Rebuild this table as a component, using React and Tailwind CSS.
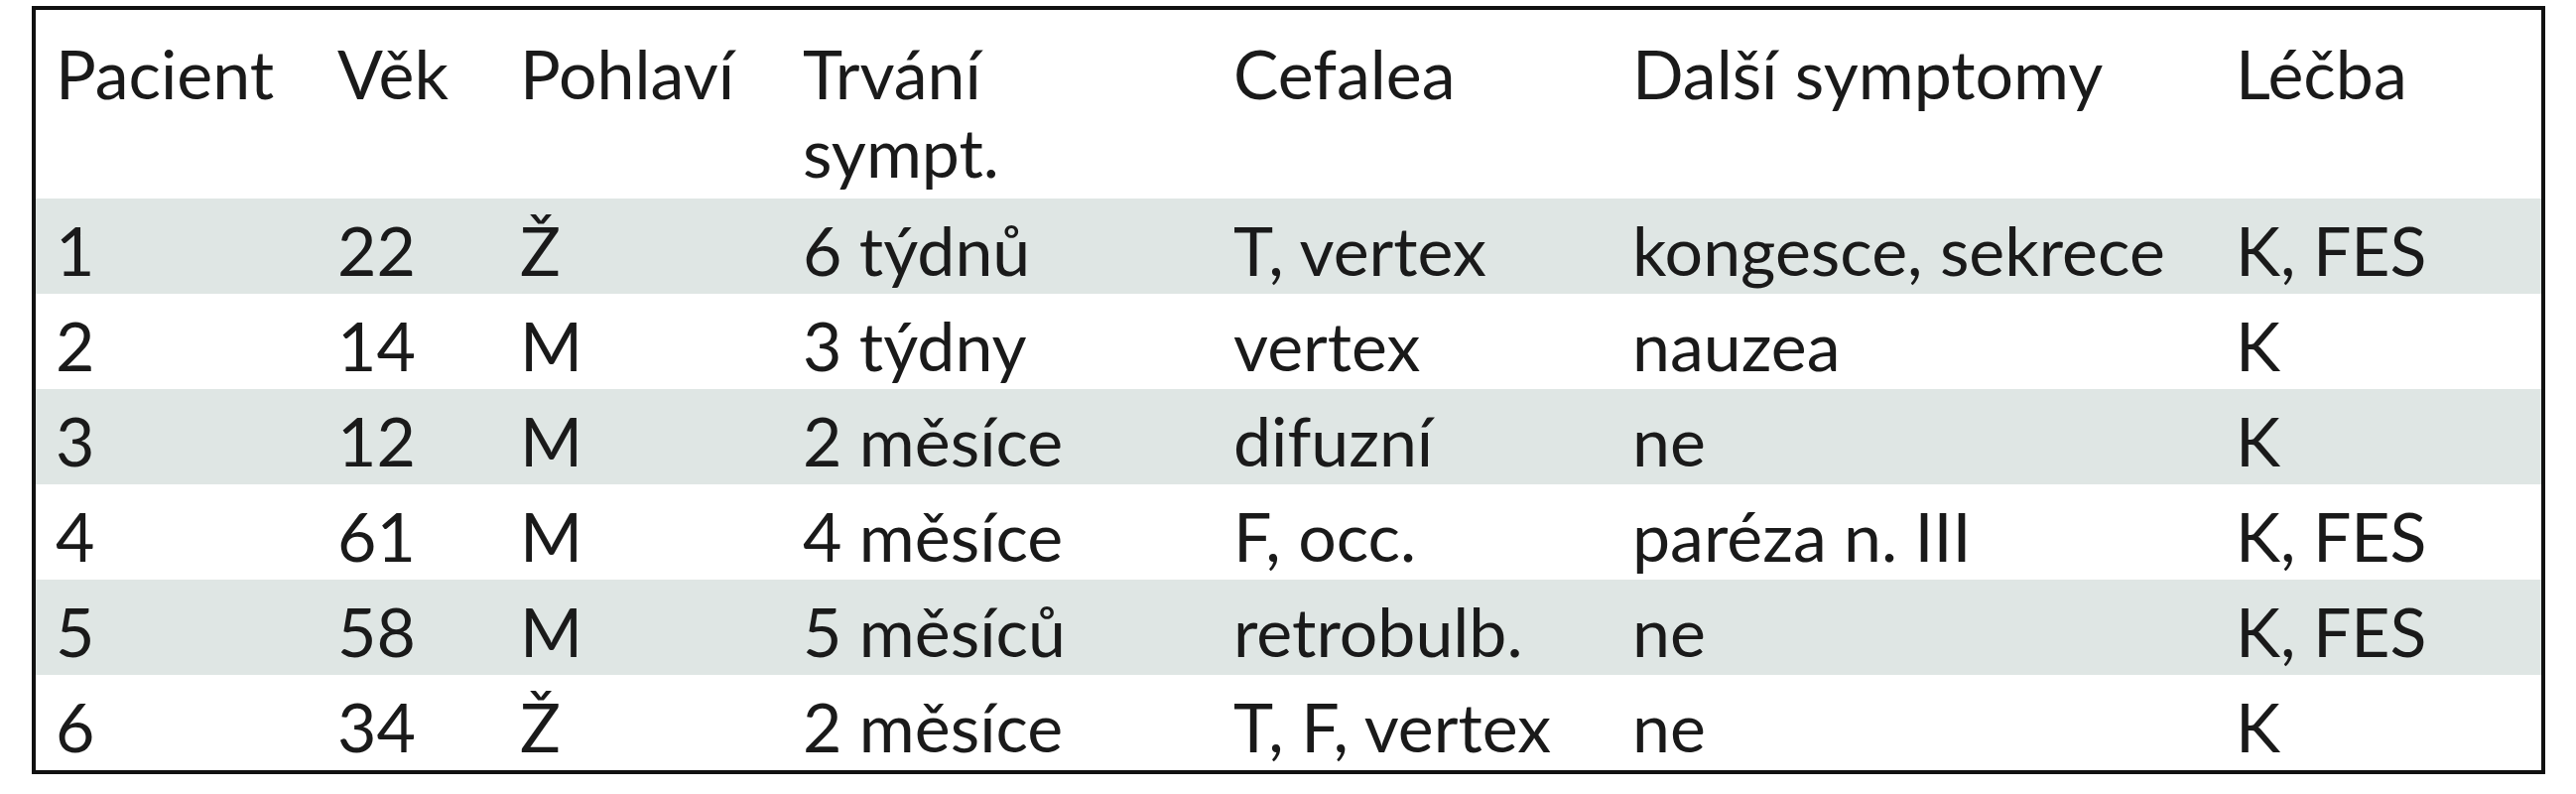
import React from 'react';

const cols = 'grid grid-cols-[284px_184px_285px_434px_402px_608px_328px]';

const header = ['Pacient', 'Věk', 'Pohlaví', 'Trvání sympt.', 'Cefalea', 'Další symptomy', 'Léčba'];

const rows = [
  ['1', '22', 'Ž', '6 týdnů', 'T, vertex', 'kongesce, sekrece', 'K, FES'],
  ['2', '14', 'M', '3 týdny', 'vertex', 'nauzea', 'K'],
  ['3', '12', 'M', '2 měsíce', 'difuzní', 'ne', 'K'],
  ['4', '61', 'M', '4 měsíce', 'F, occ.', 'paréza n. III', 'K, FES'],
  ['5', '58', 'M', '5 měsíců', 'retrobulb.', 'ne', 'K, FES'],
  ['6', '34', 'Ž', '2 měsíce', 'T, F, vertex', 'ne', 'K'],
];

export default function App() {
  return (
    <div className="bg-white w-[2596px] h-[800px] pt-[6px] pl-[32px]" style={{ fontFamily: 'Lato, "Open Sans", sans-serif' }}>
      <div className="w-[2533px] border-[4px] border-[#111] text-[#1a1a1a] text-[68px] leading-[79px]">
        <div className={`${cols} pt-[24px] pb-[8px]`}>
          {header.map((h, i) => (
            <div key={i} className="pl-[20px] pr-[8px]">
              {i === 3 ? (
                <>
                  Trvání
                  <br />
                  sympt.
                </>
              ) : (
                h
              )}
            </div>
          ))}
        </div>
        {rows.map((r, ri) => (
          <div key={ri} className={`${cols} h-[96px] pt-[12px] ${ri % 2 === 0 ? 'bg-[#dfe6e4]' : 'bg-white'}`}>
            {r.map((c, ci) => (
              <div key={ci} className="pl-[20px] whitespace-nowrap">
                {c}
              </div>
            ))}
          </div>
        ))}
      </div>
    </div>
  );
}
